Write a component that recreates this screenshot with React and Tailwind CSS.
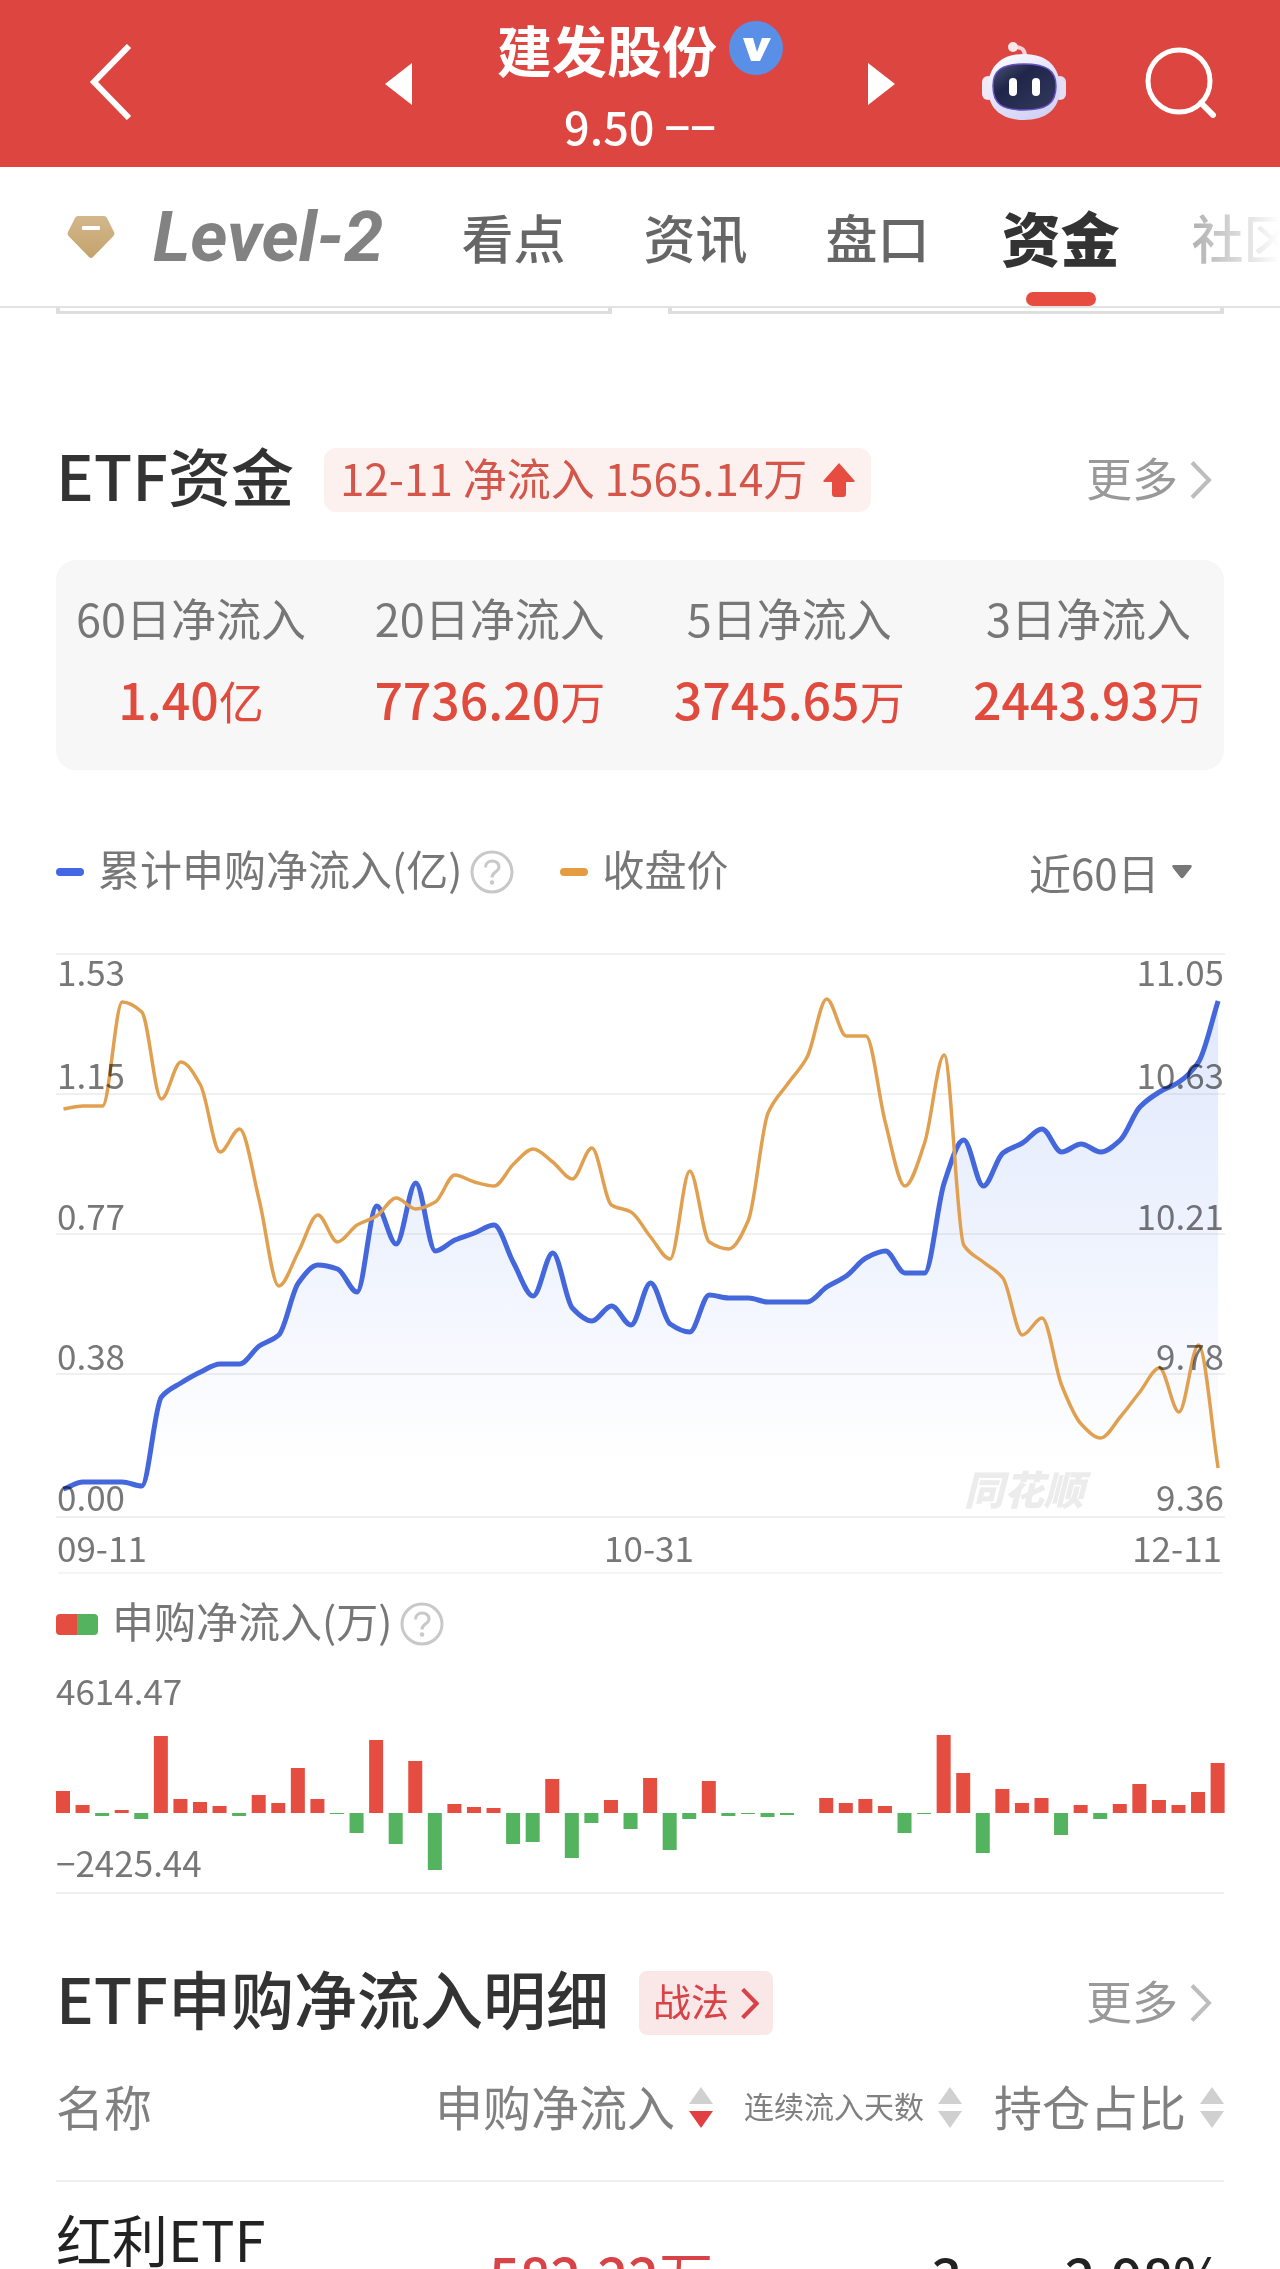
import React from "react";

const STEP = 19.57;
const X0 = 63.5;

const INFLOW = [
  1489, 1482, 1482, 1482, 1486, 1397, 1383, 1372, 1364, 1364, 1346, 1335, 1283, 1265, 1269,
  1292, 1206, 1244, 1183, 1251, 1240, 1233, 1225, 1263, 1296, 1253, 1308, 1321, 1306, 1325,
  1283, 1324, 1332, 1295, 1298, 1298, 1302, 1302, 1302, 1287, 1276, 1258, 1251, 1273, 1273,
  1183, 1140, 1186, 1153, 1143, 1129, 1152, 1144, 1152, 1140, 1107, 1092, 1082, 1062, 1001,
];

const PRICE = [
  1109, 1106, 1106, 1002, 1012, 1099, 1062, 1085, 1152, 1129, 1200, 1286, 1252, 1215, 1242,
  1225, 1216, 1198, 1209, 1202, 1175, 1182, 1186, 1164, 1149, 1162, 1179, 1148, 1205, 1212,
  1237, 1259, 1171, 1242, 1249, 1220, 1113, 1084, 1057, 999, 1036, 1036, 1123, 1186, 1143,
  1055, 1245, 1262, 1278, 1335, 1318, 1385, 1424, 1438, 1417, 1392, 1368, 1412, 1345, 1468,
];

const BARS = [
  22, 8, -3, 3, -6, 77, 14, 11, 7, -3, 18, 10, 45, 14, -1, -20, 73, -31, 52, -57, 9, 6, 5, -31,
  -29, 34, -45, -10, 13, -16, 35, -37, -6, 32, -3, -1, -4, -2, 0, 15, 10, 14, 7, -20, -1, 78, 40,
  -40, 24, 10, 15, -22, 8, -6, 9, 29, 13, 8, 21, 50,
];

const GRID = [954, 1094, 1234, 1374, 1517];
const TICK_BASE = [986, 1089, 1230, 1370, 1511];
const LEFT_TICKS = ["1.53", "1.15", "0.77", "0.38", "0.00"];
const RIGHT_TICKS = ["11.05", "10.63", "10.21", "9.78", "9.36"];

// Monotone cubic interpolation, so that the curve never overshoots its points.
function smooth(ys) {
  const n = ys.length;
  const d = [];
  for (let i = 0; i < n - 1; i++) d.push((ys[i + 1] - ys[i]) / STEP);
  const m = ys.map((_, i) => {
    if (i === 0) return d[0];
    if (i === n - 1) return d[n - 2];
    const a = d[i - 1];
    const b = d[i];
    return a * b <= 0 ? 0 : (2 * a * b) / (a + b);
  });
  let p = `M${X0},${ys[0]}`;
  for (let i = 0; i < n - 1; i++) {
    const x = X0 + i * STEP;
    const t = STEP / 3;
    p += `C${x + t},${ys[i] + m[i] * t} ${x + 2 * t},${ys[i + 1] - m[i + 1] * t} ${x + STEP},${ys[i + 1]}`;
  }
  return p;
}

const Robot = () => (
  <svg width="84" height="80" viewBox="0 0 84 80" aria-hidden="true">
    <defs>
      <linearGradient id="shell" x1="0" y1="0" x2="0.6" y2="1">
        <stop offset="0" stopColor="#ffffff" />
        <stop offset="0.55" stopColor="#e4e4fb" />
        <stop offset="1" stopColor="#d3d2f3" />
      </linearGradient>
      <linearGradient id="visor" x1="0" y1="0" x2="1" y2="1">
        <stop offset="0" stopColor="#4b5270" />
        <stop offset="0.35" stopColor="#20264a" />
        <stop offset="1" stopColor="#323a5e" />
      </linearGradient>
    </defs>
    <path d="M31 5Q43 4 43 14" fill="none" stroke="#f6d3da" strokeWidth="4" />
    <circle cx="31" cy="5" r="5" fill="#fbe6ea" />
    <rect x="0" y="34" width="12" height="24" rx="6" fill="#f3e9f6" />
    <rect x="72" y="34" width="12" height="24" rx="6" fill="#e3def5" />
    <path d="M42 12C66 12 78 26 78 46C78 67 64 78 42 78C20 78 6 67 6 46C6 26 18 12 42 12Z" fill="url(#shell)" />
    <path d="M42 22C64 22 74 28 74 44C74 62 64 68 42 68C20 68 11 62 11 44C11 28 20 22 42 22Z" fill="url(#visor)" stroke="#6a50c8" strokeWidth="1.500" />
    <rect x="27" y="36" width="8" height="18" rx="4" fill="#fff" />
    <rect x="50" y="36" width="8" height="18" rx="4" fill="#fff" />
  </svg>
);

const Chevron = ({ className, w = 22, h = 38, sw = 4 }) => (
  <svg width={w} height={h} viewBox="0 0 22 38" className={className} fill="none" stroke="currentColor" strokeWidth={sw} aria-hidden="true">
    <path d="M2 1.500L19 19L2 36.500" />
  </svg>
);

const Help = () => (
  <button type="button" aria-label="说明" className="text-[#c8c8c8]">
    <svg width="44" height="44" viewBox="0 0 44 44" fill="none" stroke="currentColor" strokeWidth="3">
      <circle cx="22" cy="22" r="20" />
      <path d="M15.500 17.500C15.500 9 29 9 29 17C29 22 22 21.500 22 27.500" />
      <circle cx="22" cy="32.500" r="2.200" fill="currentColor" stroke="none" />
    </svg>
  </button>
);

const Sort = ({ down }) => (
  <svg width="24" height="42" viewBox="0 0 24 42" className="shrink-0" aria-hidden="true">
    <path d="M12 0L24 17H0Z" fill="#d0d0d0" />
    <path d="M0 24H24L12 41Z" fill={down ? "#e23f43" : "#d0d0d0"} />
  </svg>
);

const More = () => (
  <a href="#more" className="ml-auto flex items-center gap-3 pr-3 text-[46px] leading-[60px] text-[#999]">
    <span className="pb-2">更多</span>
    <Chevron className="text-[#bdbdbd]" />
  </a>
);

const Stat = ({ label, value, unit }) => (
  <div className="flex flex-col items-center gap-5">
    <span className="text-[45px] leading-[60px] text-[#777]">{label}</span>
    <span className="text-[50px] leading-[60px] font-medium text-[#e04b3e]">
      {value}
      <span className="text-[45px] leading-none font-normal">{unit}</span>
    </span>
  </div>
);

function TrendChart() {
  const line = smooth(INFLOW);
  const lastX = X0 + STEP * 59;
  return (
    <svg viewBox="56 950 1168 628" className="mt-12 block h-auto w-full overflow-visible" role="img" aria-label="累计申购净流入与收盘价">
      <defs>
        <linearGradient id="area" gradientUnits="userSpaceOnUse" x1="0" y1="1001" x2="0" y2="1517">
          <stop offset="0" stopColor="#3f72ee" stopOpacity="0.16" />
          <stop offset="0.5" stopColor="#3f72ee" stopOpacity="0.08" />
          <stop offset="0.9" stopColor="#3f72ee" stopOpacity="0" />
        </linearGradient>
      </defs>
      {GRID.map((y) => (
        <line key={y} x1="56" x2="1225" y1={y} y2={y} stroke="#f0f0f0" strokeWidth="2" />
      ))}
      <line x1="58" x2="1223" y1="1573" y2="1573" stroke="#f5f5f5" strokeWidth="2" />
      <text x="964" y="1505" fontSize="40" fontWeight="900" fontStyle="italic" fill="#ececec">同花顺</text>
      <path d={`${line}L${lastX},1517L${X0},1517Z`} fill="url(#area)" />
      <path d={line} fill="none" stroke="#4467dc" strokeWidth="5" strokeLinejoin="round" />
      <path d={smooth(PRICE)} fill="none" stroke="#e0a050" strokeWidth="3.500" strokeLinejoin="round" />
      <g fontSize="35" fill="#777" className="mix-blend-multiply">
        {TICK_BASE.map((y, i) => (
          <React.Fragment key={y}>
            <text x="57" y={y}>{LEFT_TICKS[i]}</text>
            <text x="1224" y={y} textAnchor="end">{RIGHT_TICKS[i]}</text>
          </React.Fragment>
        ))}
        <text x="57" y="1562">09-11</text>
        <text x="649" y="1562" textAnchor="middle">10-31</text>
        <text x="1222" y="1562" textAnchor="end">12-11</text>
      </g>
    </svg>
  );
}

function BarChart() {
  return (
    <svg viewBox="56 1670 1168 226" className="mt-4 block h-auto w-full overflow-visible" role="img" aria-label="申购净流入">
      {BARS.map((v, i) => (
        <rect
          key={i}
          x={56 + i * STEP}
          y={v > 0 ? 1813 - v : 1813}
          width="14"
          height={Math.abs(v)}
          fill={v > 0 ? "#e44d40" : "#53b35e"}
        />
      ))}
      <text x="56" y="1705" fontSize="35" fill="#777">4614.47</text>
      <text x="56" y="1877" fontSize="35" fill="#777">−2425.44</text>
      <line x1="56" x2="1224" y1="1893" y2="1893" stroke="#f0f0f0" strokeWidth="2" />
    </svg>
  );
}

const TABS = ["看点", "资讯", "盘口"];

export default function App() {
  return (
    <div className="flex h-screen flex-col overflow-hidden bg-white font-['Noto_Sans_CJK_SC',sans-serif]">
      <header className="grid h-[167px] shrink-0 grid-cols-[1fr_auto_1fr] bg-[#dd4540] text-white">
        <div className="flex items-center pb-1 pl-[88px]">
          <button type="button" aria-label="返回">
            <svg width="44" height="76" viewBox="0 0 44 76" fill="none" stroke="currentColor" strokeWidth="6">
              <path d="M41 2L6 38L41 74" />
            </svg>
          </button>
        </div>
        <div className="flex w-[510px] items-center justify-between">
          <button type="button" aria-label="上一只">
            <svg width="27" height="42" viewBox="0 0 27 42" fill="currentColor"><path d="M27 0V42L0 21Z" /></svg>
          </button>
          <div className="flex flex-col items-center gap-4 pt-1">
            <h1 className="flex items-center gap-3 text-[55px] leading-[64px] font-bold">
              建发股份
              <svg width="54" height="54" viewBox="0 0 54 54" aria-label="认证">
                <circle cx="27" cy="27" r="27" fill="#5a8fe8" />
                <path d="M14 17H24L28 31L33 17H42L31 40H22Z" fill="#fff" />
              </svg>
            </h1>
            <p className="text-[45px] leading-[60px] font-medium">9.50 −−</p>
          </div>
          <button type="button" aria-label="下一只">
            <svg width="27" height="42" viewBox="0 0 27 42" fill="currentColor"><path d="M0 0V42L27 21Z" /></svg>
          </button>
        </div>
        <div className="flex items-center justify-end gap-[78px] pr-[64px] pb-1">
          <button type="button" aria-label="智能助手"><Robot /></button>
          <button type="button" aria-label="搜索">
            <svg width="72" height="72" viewBox="0 0 72 72" fill="none" stroke="currentColor" strokeWidth="5">
              <circle cx="35" cy="35" r="31" />
              <path d="M57 57L69 69" strokeWidth="6" strokeLinecap="round" />
            </svg>
          </button>
        </div>
      </header>

      <nav className="relative flex h-[141px] shrink-0 items-center gap-[78px] overflow-hidden border-b-2 border-[#e2e2e2] pl-[67px] text-[52px] leading-[80px] font-medium whitespace-nowrap text-[#666]">
        <a href="#level2" className="flex items-center gap-[38px] font-['Roboto',sans-serif] text-[71px] font-bold text-[#828282] italic">
          <svg width="48" height="44" viewBox="0 0 48 44" aria-hidden="true">
            <defs>
              <linearGradient id="gem" x1="0" y1="0" x2="0" y2="1">
                <stop offset="0" stopColor="#d3b88c" />
                <stop offset="1" stopColor="#c4a26c" />
              </linearGradient>
            </defs>
            <path d="M11 1H37Q39 1 40 3L47 17Q48 19 46.500 21L26 42Q24 44 22 42L1.500 21Q0 19 1 17L8 3Q9 1 11 1Z" fill="url(#gem)" />
            <rect x="15" y="11" width="18" height="4" rx="1" fill="#fff" />
          </svg>
          Level-2
        </a>
        {TABS.map((t) => (
          <a key={t} href={`#${t}`}>{t}</a>
        ))}
        <a href="#资金" aria-current="page" className="relative -mx-1.5 flex h-full items-center text-[59px] font-black text-[#333]">
          资金
          <span className="absolute bottom-0 left-1/2 h-[14px] w-[70px] -translate-x-1/2 rounded-full bg-[#e64c3f]" />
        </a>
        <a href="#社区">社区</a>
        <span className="pointer-events-none absolute inset-y-0 right-0 w-[120px] bg-linear-to-r from-white/30 to-white" />
      </nav>

      <main className="min-h-0 flex-1 overflow-hidden px-14">
        <div className="grid grid-cols-2 gap-14">
          <div className="h-[6px] border-x-4 border-b-3 border-[#dedede]" />
          <div className="h-[6px] border-x-4 border-b-3 border-[#dedede]" />
        </div>

        <section>
          <div className="mt-[134px] flex h-16 items-center">
            <h2 className="pb-3 text-[63px] leading-[64px] font-medium text-[#333]">ETF资金</h2>
            <p className="ml-[30px] flex h-full items-center gap-4 rounded-xl bg-[#fdf1f0] px-4 text-[44px] leading-[60px] text-[#d4564a]">
              <span className="pb-1.5">12-11 净流入 1565.14万</span>
              <svg width="32" height="34" viewBox="0 0 32 34" fill="#e64c3f" aria-hidden="true">
                <path d="M16 0L31 17Q33 19 30 19H23V31Q23 34 20 34H12Q9 34 9 31V19H2Q-1 19 1 17Z" />
              </svg>
            </p>
            <More />
          </div>
          <div className="mt-12 flex justify-between rounded-[20px] bg-[#f7f7f7] px-5 pt-7 pb-[42px]">
            <Stat label="60日净流入" value="1.40" unit="亿" />
            <Stat label="20日净流入" value="7736.20" unit="万" />
            <Stat label="5日净流入" value="3745.65" unit="万" />
            <Stat label="3日净流入" value="2443.93" unit="万" />
          </div>

          <div className="mt-[72px] flex h-[60px] items-center text-[42px] leading-[60px] text-[#777]">
            <span className="mr-3.5 h-2 w-7 rounded-full bg-[#4467e6]" />
            <span className="pb-2">累计申购净流入(亿)</span>
            <span className="ml-2 flex"><Help /></span>
            <span className="mr-3.5 ml-[46px] h-2 w-7 rounded-full bg-[#e59b40]" />
            <span className="pb-2">收盘价</span>
            <label className="ml-auto flex items-center gap-3 pr-8">
              <select aria-label="时间范围" className="appearance-none bg-transparent">
                <option>近60日</option>
              </select>
              <svg width="20" height="14" viewBox="0 0 20 14" fill="#777" aria-hidden="true">
                <path d="M2 0H18Q21 0 19 3L11.500 12.500Q10 14 8.500 12.500L1 3Q-1 0 2 0Z" />
              </svg>
            </label>
          </div>
          <TrendChart />

          <div className="mt-4 flex h-[60px] items-center text-[42px] leading-[60px] text-[#777]">
            <span className="mr-3.5 flex h-[21px] w-[42px] overflow-hidden rounded-sm">
              <span className="flex-1 bg-[#e44d40]" />
              <span className="flex-1 bg-[#53b35e]" />
            </span>
            <span className="pb-2">申购净流入(万)</span>
            <span className="ml-2 flex"><Help /></span>
          </div>
          <BarChart />
        </section>

        <section>
          <div className="mt-[75px] flex h-16 items-center">
            <h2 className="pb-3 text-[63px] leading-[64px] font-medium text-[#333]">ETF申购净流入明细</h2>
            <a href="#strategy" className="ml-[30px] flex h-full items-center gap-3 rounded-lg bg-[#fae8e9] px-3.5 text-[38px] leading-[60px] text-[#d84348]">
              <span className="pb-1.5">战法</span>
              <Chevron w={18} h={31} sw={5} />
            </a>
            <More />
          </div>
          <table className="w-full table-fixed border-collapse">
            <thead>
              <tr className="h-[146px] border-b-2 border-[#efefef] text-[48px] text-[#808080]">
                <th className="pb-1.5 text-left font-normal">名称</th>
                <th className="w-[357px] font-normal">
                  <button type="button" className="ml-auto flex items-center gap-3.5 whitespace-nowrap"><span className="pb-1.5">申购净流入</span><Sort down /></button>
                </th>
                <th className="w-[249px] font-normal">
                  <button type="button" className="ml-auto flex items-center gap-3.5 text-[30px] whitespace-nowrap"><span className="pb-1">连续流入天数</span><Sort /></button>
                </th>
                <th className="w-[262px] font-normal">
                  <button type="button" className="ml-auto flex items-center gap-3.5 whitespace-nowrap"><span className="pb-1.5">持仓占比</span><Sort /></button>
                </th>
              </tr>
            </thead>
            <tbody>
              <tr className="h-[186px] text-right text-[54px] leading-[64px] font-medium text-[#222]">
                <td className="pt-6 text-left align-top text-[56px] font-normal whitespace-nowrap">红利ETF</td>
                <td className="text-[#d84348]">582.22<span className="font-normal">万</span></td>
                <td>3</td>
                <td>2.98%</td>
              </tr>
            </tbody>
          </table>
        </section>
      </main>
    </div>
  );
}
